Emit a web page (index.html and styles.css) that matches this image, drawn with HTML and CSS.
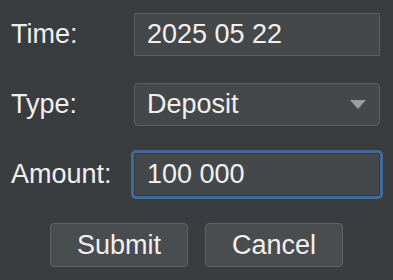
FILE: index.html
```html
<!DOCTYPE html>
<html>
<head>
<meta charset="utf-8">
<link rel="stylesheet" href="styles.css">
</head>
<body>
<div class="dialog">
  <form class="form">
    <label class="label" for="time">Time:</label>
    <div class="field">2025 05 22</div>
    <label class="label">Type:</label>
    <div class="field combo">
      <span>Deposit</span>
      <svg class="arrow" width="16" height="9" viewBox="0 0 16 9"><polygon points="0,0 16,0 8,9" fill="#9b9d9f"/></svg>
    </div>
    <label class="label">Amount:</label>
    <div class="field focus">100 000</div>
  </form>
  <div class="buttons">
    <div class="btn">Submit</div>
    <div class="btn">Cancel</div>
  </div>
</div>
</body>
</html>
```
FILE: styles.css
```css
html, body {
  margin: 0;
  padding: 0;
  background: #3a3d40;
}
.dialog {
  width: 393px;
  height: 280px;
  padding: 13px 0 0 11px;
  box-sizing: border-box;
  font-family: "Liberation Sans", Arial, sans-serif;
  font-size: 27px;
  color: #f2f0ee;
}
.form {
  display: grid;
  grid-template-columns: 123px 246px;
  grid-auto-rows: 43px;
  row-gap: 27px;
  align-items: center;
}
.label {
  line-height: 43px;
}
.field {
  height: 43px;
  box-sizing: border-box;
  background: #45484b;
  border: 1px solid #5d6063;
  border-radius: 1px;
  padding: 0 12px;
  display: flex;
  align-items: center;
}
.combo {
  border-radius: 4px;
  justify-content: space-between;
  padding-right: 13px;
}
.arrow {
  display: block;
}
.focus {
  border: 1px solid #34383c;
  border-radius: 2px;
  box-shadow: 0 0 0 3px #3f6a9a;
}
.buttons {
  display: flex;
  justify-content: center;
  gap: 17px;
  margin: 27px 0 0 -11px;
}
.btn {
  width: 138px;
  height: 44px;
  box-sizing: border-box;
  background: #4a4d50;
  border: 1px solid #606366;
  border-radius: 4px;
  display: flex;
  align-items: center;
  justify-content: center;
}
```
